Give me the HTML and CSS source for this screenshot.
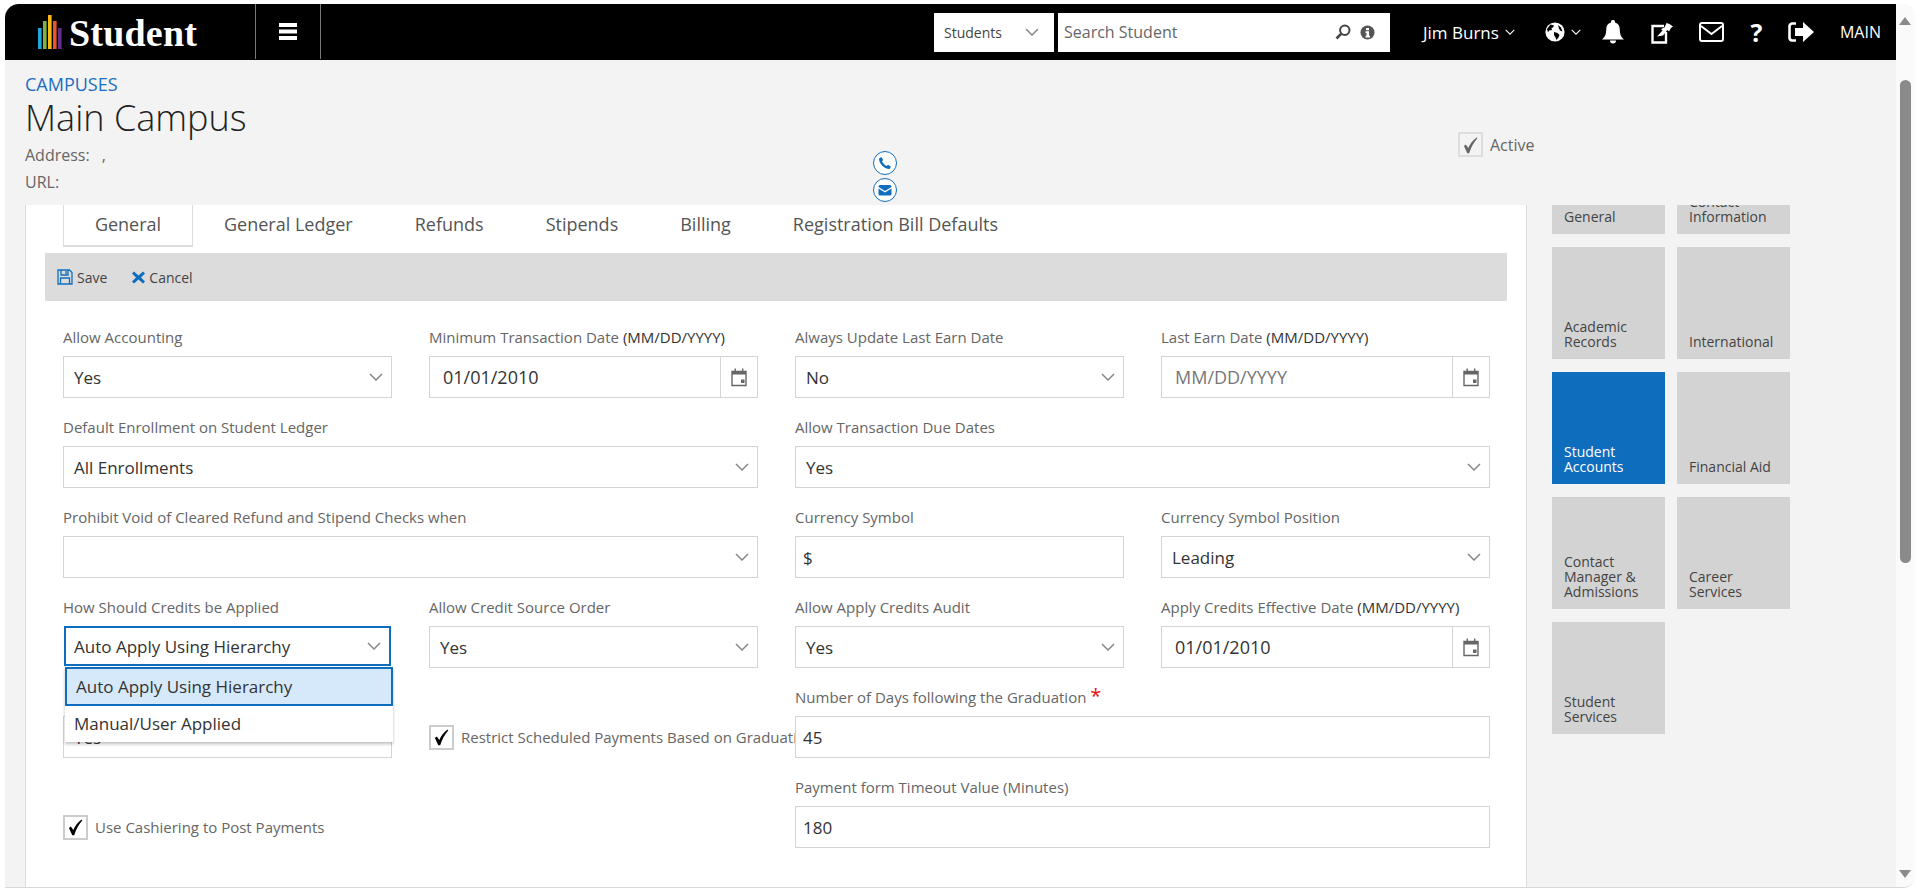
FILE: index.html
```html
<!DOCTYPE html>
<html lang="en">
<head>
    <meta charset="UTF-8">
    <title>Main Campus</title>
    <link rel="stylesheet" href="styles.css">
</head>
<body>
    <svg class="sprites" width="0" height="0">
        <symbol id="chevron" viewBox="0 0 14 8">
            <path d="M1 1l6 6 6-6" fill="none" stroke="currentColor" stroke-width="1.5"/>
        </symbol>
        <symbol id="calendar" viewBox="0 0 16 20">
            <path d="M1 4.5h14v14H1z" fill="none" stroke="#666" stroke-width="1.4"/>
            <path d="M1 4h14v3.500H1zM3.500 1.500h1.400v3H3.500zM11 1.500h1.400v3H11zM10 12.500h3.500v3.500H10z" fill="#666"/>
        </symbol>
        <symbol id="tick" viewBox="0 0 24 24">
            <path d="M4.500 13l2.200-1.600 2.800 4.100C11.500 11 14.500 6.500 19 3.500l.8.8C15.500 9.500 12.500 15 10.500 21.500H8.300z" fill="currentColor"/>
        </symbol>
    </svg>

    <div class="window">
        <div class="main">
            <!-- top bar -->
            <header class="topbar">
                <div class="logo">
                    <svg class="logo-bars" width="24" height="34" viewBox="0 0 24 34">
                        <rect x="0" y="13" width="3.600" height="21" fill="#1ea7dc"/>
                        <rect x="5" y="6" width="3.600" height="28" fill="#7cb342"/>
                        <rect x="10" y="0" width="3.600" height="34" fill="#fdb913"/>
                        <rect x="15" y="6" width="3.600" height="28" fill="#e8562a"/>
                        <rect x="20" y="13" width="3.600" height="21" fill="#5f2d8c"/>
                    </svg>
                    <span class="logo-text">Student</span>
                </div>
                <div class="menu-btn">
                    <svg width="18" height="17" viewBox="0 0 18 17"><path d="M0 0h18v4H0zM0 6.500h18v4H0zM0 13h18v4H0z" fill="#fff"/></svg>
                </div>
                <div class="search-type">
                    <span>Students</span>
                    <svg class="search-chevron" width="14" height="8"><use href="#chevron"/></svg>
                </div>
                <div class="search-box">
                    <span class="search-text">Search Student</span>
                    <svg width="16" height="16" viewBox="0 0 16 16"><circle cx="9.800" cy="6.200" r="4.700" fill="none" stroke="#444" stroke-width="2"/><path d="M6.300 9.700L1.500 14.500" stroke="#444" stroke-width="2.600"/></svg>
                    <svg class="info-icon" width="15" height="15" viewBox="0 0 15 15"><circle cx="7.500" cy="7.500" r="7" fill="#555"/><path d="M6 3h3v2.200H6zM5.500 6.300h3.500v4.500h1V12.500H5.500v-1.700h1V8h-1z" fill="#fff"/></svg>
                </div>
                <div class="user-menu">
                    <span>Jim Burns</span>
                    <svg width="10" height="6"><use href="#chevron"/></svg>
                </div>
                <div class="top-icons">
                    <span class="globe">
                        <svg width="20" height="20" viewBox="0 0 20 20"><circle cx="10" cy="10" r="9.600" fill="#fff"/><path d="M5.500 2.500L9 3.500 8 5.500 6.500 6l.5 2-3 .5-1 2L2 7zM9 10l3.500 1 2 2-1 2.500-2 2.500-1-2.500L9 13zM13 3l3 2.500 1.500 4-2.500-1-1-2z" fill="#000"/></svg>
                        <svg class="globe-chevron" width="10" height="6"><use href="#chevron"/></svg>
                    </span>
                    <svg class="bell" width="22" height="24" viewBox="0 0 22 24"><path d="M11 0a2 2 0 0 1 2 2.400c3.300.8 4.800 3.500 4.800 7 0 4.500 1 7.200 4.200 10H0c3.200-2.800 4.200-5.500 4.200-10 0-3.500 1.500-6.200 4.800-7A2 2 0 0 1 11 0zM8 20.500h6a3 3 0 0 1-6 0z" fill="#fff"/></svg>
                    <svg class="pin-note" width="23" height="23" viewBox="0 0 23 23"><path d="M13 5H1.500v16.500H15V11" fill="none" stroke="#fff" stroke-width="2.400"/><path d="M6 15.500l5.500-6-1.500-1.500 3.500-1.500 2-4.500 3 1L22 5.500l-2 1.500-2 3.500-1.500-1.500-4.500 5.500z" fill="#fff"/></svg>
                    <svg class="mail" width="25" height="20" viewBox="0 0 25 20"><rect x="1" y="1" width="23" height="18" rx="2" fill="none" stroke="#fff" stroke-width="2"/><path d="M2 4l10.500 8L23 4" fill="none" stroke="#fff" stroke-width="2"/></svg>
                    <span class="help">?</span>
                    <svg class="sign-out" width="26" height="20" viewBox="0 0 26 20"><path d="M8 1.500H4A3 3 0 0 0 1.500 4v12A3 3 0 0 0 4 18.500h4" fill="none" stroke="#fff" stroke-width="2.600"/><path d="M7 6h8V0l11 10-11 10v-6H7z" fill="#fff"/></svg>
                    <span class="main-link">MAIN</span>
                </div>
            </header>

            <!-- campus heading -->
            <div class="page-head">
                <div class="head-left">
                    <a class="crumb">CAMPUSES</a>
                    <h1 class="campus-name">Main Campus</h1>
                    <div class="head-line">Address: <span class="comma">,</span></div>
                    <div class="head-line">URL:</div>
                </div>
                <div class="head-icons">
                    <span class="round-icon">
                        <svg width="14" height="14" viewBox="0 0 14 14"><path d="M3.200 1L1 2.500C.8 7.500 6.500 13.200 11.500 13l1.500-2.200-3-2-1.500 1.200C7 9.200 4.800 7 4 5.500L5.200 4z" fill="#0f6dbd"/></svg>
                    </span>
                    <span class="round-icon">
                        <svg width="14" height="12" viewBox="0 0 14 12"><path d="M2 1h10a1.500 1.500 0 0 1 1.500 1.500v.5L7 7 .5 3v-.5A1.500 1.500 0 0 1 2 1zM.5 4.500L7 8.500l6.500-4V10A1.500 1.500 0 0 1 12 11.500H2A1.500 1.500 0 0 1 .5 10z" fill="#0f6dbd"/></svg>
                    </span>
                </div>
                <div class="head-active">
                    <span class="checkbox is-disabled"><svg width="22" height="22"><use href="#tick"/></svg></span>
                    <span>Active</span>
                </div>
            </div>

            <div class="content-row">
                <div class="panel">
                    <ul class="tabs">
                        <li class="tab is-active">General</li>
                        <li class="tab">General Ledger</li>
                        <li class="tab">Refunds</li>
                        <li class="tab">Stipends</li>
                        <li class="tab">Billing</li>
                        <li class="tab">Registration Bill Defaults</li>
                    </ul>

                    <div class="toolbar">
                        <span class="tool">
                            <svg width="16" height="16" viewBox="0 0 16 16"><path d="M1 1h11.500L15 3.500V15H1z" fill="none" stroke="#0f6dbd" stroke-width="1.300"/><path d="M4 1v5h7V1M9 2v3M3.500 15V9h9v6" fill="none" stroke="#0f6dbd" stroke-width="1.300"/></svg>
                            Save
                        </span>
                        <span class="tool tool-cancel">
                            <svg width="13" height="13" viewBox="0 0 13 13"><path d="M2 .5l4.500 4 4.500-4 2 2-4 4 4 4-2 2-4.500-4-4.500 4-2-2 4-4-4-4z" fill="#0f6dbd"/></svg>
                            Cancel
                        </span>
                    </div>

                    <div class="form-grid">
                        <div class="field">
                            <label>Allow Accounting</label>
                            <div class="select"><span>Yes</span><svg width="14" height="8"><use href="#chevron"/></svg></div>
                        </div>
                        <div class="field">
                            <label>Minimum Transaction Date <em>(MM/DD/YYYY)</em></label>
                            <div class="date"><span>01/01/2010</span><i><svg width="16" height="20"><use href="#calendar"/></svg></i></div>
                        </div>
                        <div class="field">
                            <label>Always Update Last Earn Date</label>
                            <div class="select"><span>No</span><svg width="14" height="8"><use href="#chevron"/></svg></div>
                        </div>
                        <div class="field">
                            <label>Last Earn Date <em>(MM/DD/YYYY)</em></label>
                            <div class="date"><span class="placeholder">MM/DD/YYYY</span><i><svg width="16" height="20"><use href="#calendar"/></svg></i></div>
                        </div>

                        <div class="field span-2">
                            <label>Default Enrollment on Student Ledger</label>
                            <div class="select"><span>All Enrollments</span><svg width="14" height="8"><use href="#chevron"/></svg></div>
                        </div>
                        <div class="field span-2">
                            <label>Allow Transaction Due Dates</label>
                            <div class="select"><span>Yes</span><svg width="14" height="8"><use href="#chevron"/></svg></div>
                        </div>

                        <div class="field span-2">
                            <label>Prohibit Void of Cleared Refund and Stipend Checks when</label>
                            <div class="select"><span></span><svg width="14" height="8"><use href="#chevron"/></svg></div>
                        </div>
                        <div class="field">
                            <label>Currency Symbol</label>
                            <div class="text-input">$</div>
                        </div>
                        <div class="field">
                            <label>Currency Symbol Position</label>
                            <div class="select"><span>Leading</span><svg width="14" height="8"><use href="#chevron"/></svg></div>
                        </div>

                        <div class="field">
                            <label>How Should Credits be Applied</label>
                            <div class="select-wrap">
                                <div class="select is-open"><span>Auto Apply Using Hierarchy</span><svg width="14" height="8"><use href="#chevron"/></svg></div>
                                <ul class="dropdown">
                                    <li class="option is-current">Auto Apply Using Hierarchy</li>
                                    <li class="option">Manual/User Applied</li>
                                </ul>
                            </div>
                        </div>
                        <div class="field">
                            <label>Allow Credit Source Order</label>
                            <div class="select"><span>Yes</span><svg width="14" height="8"><use href="#chevron"/></svg></div>
                        </div>
                        <div class="field">
                            <label>Allow Apply Credits Audit</label>
                            <div class="select"><span>Yes</span><svg width="14" height="8"><use href="#chevron"/></svg></div>
                        </div>
                        <div class="field">
                            <label>Apply Credits Effective Date <em>(MM/DD/YYYY)</em></label>
                            <div class="date"><span>01/01/2010</span><i><svg width="16" height="20"><use href="#calendar"/></svg></i></div>
                        </div>

                        <div class="field">
                            <label>&nbsp;</label>
                            <div class="select"><span>Yes</span><svg width="14" height="8"><use href="#chevron"/></svg></div>
                        </div>
                        <div class="field check-field clipped">
                            <span class="checkbox"><svg width="22" height="22"><use href="#tick"/></svg></span>
                            <span class="check-label">Restrict Scheduled Payments Based on Graduation</span>
                        </div>
                        <div class="field span-2">
                            <label>Number of Days following the Graduation <b class="req">*</b></label>
                            <div class="text-input">45</div>
                        </div>

                        <div class="field check-field span-2">
                            <span class="checkbox"><svg width="22" height="22"><use href="#tick"/></svg></span>
                            <span class="check-label">Use Cashiering to Post Payments</span>
                        </div>
                        <div class="field span-2">
                            <label>Payment form Timeout Value (Minutes)</label>
                            <div class="text-input">180</div>
                        </div>
                    </div>
                </div>

                <nav class="tiles">
                    <a class="tile">General</a>
                    <a class="tile">Contact Information</a>
                    <a class="tile">Academic Records</a>
                    <a class="tile">International</a>
                    <a class="tile is-active">Student Accounts</a>
                    <a class="tile">Financial Aid</a>
                    <a class="tile">Contact Manager &amp; Admissions</a>
                    <a class="tile">Career Services</a>
                    <a class="tile">Student Services</a>
                </nav>
            </div>
        </div>

        <div class="scrollbar">
            <span class="arrow-up"></span>
            <div class="thumb"></div>
            <span class="arrow-down"></span>
        </div>
    </div>
</body>
</html>
```

FILE: styles.css
```css
* {
    margin: 0;
    padding: 0;
    box-sizing: border-box;
}

html, body {
    height: 100%;
    overflow: hidden;
    background: #fff;
}

body {
    font-family: "Open Sans", "Liberation Sans", sans-serif;
    color: #444;
    padding: 4px 5px 3px 5px;
}

ul {
    list-style: none;
}

.sprites {
    position: absolute;
}

.window {
    display: flex;
    height: 100%;
    overflow: hidden;
    border-radius: 14px 10px 12px 0;
    border-bottom: 1px solid #d8d8d8;
}

.main {
    flex: 1;
    min-width: 0;
    display: flex;
    flex-direction: column;
    background: #f3f3f3;
}

/* top bar */
.topbar {
    flex: none;
    display: flex;
    align-items: center;
    height: 56px;
    background: #000;
    color: #fff;
}

.logo {
    display: flex;
    align-items: flex-start;
    width: 250px;
    height: 56px;
    padding: 11px 0 0 33px;
}

.logo-text {
    margin-left: 7px;
    font-family: "Liberation Serif", serif;
    font-size: 38px;
    font-weight: 700;
    line-height: 36px;
    letter-spacing: .2px;
}

.menu-btn {
    display: flex;
    align-items: center;
    justify-content: center;
    width: 66px;
    height: 55px;
    margin-top: -1px;
    border-left: 1px solid #777;
    border-right: 1px solid #777;
    padding-bottom: 1px;
}

.search-type {
    display: flex;
    align-items: center;
    width: 120px;
    height: 39px;
    margin-left: 613px;
    padding-left: 10px;
    background: #fff;
    color: #444;
    font-size: 14px;
}

.search-chevron {
    margin-left: 23px;
    color: #888;
}

.search-box {
    display: flex;
    align-items: center;
    width: 332px;
    height: 39px;
    margin-left: 4px;
    padding: 0 15px 0 6px;
    background: #fff;
}

.search-text {
    flex: 1;
    font-size: 16px;
    color: #666;
}

.info-icon {
    margin-left: 9px;
}

.user-menu {
    display: flex;
    align-items: center;
    margin-left: 33px;
    font-size: 17px;
    color: #fff;
}

.user-menu svg {
    margin-left: 6px;
}

.top-icons {
    display: flex;
    align-items: center;
    margin-left: 30px;
}

.globe {
    display: flex;
    align-items: center;
    margin-right: 21px;
}

.globe-chevron {
    margin-left: 6px;
}

.pin-note {
    margin-left: 27px;
}

.mail {
    margin-left: 25px;
}

.help {
    width: 15px;
    margin-left: 25px;
    font-size: 25px;
    font-weight: 700;
    line-height: 1;
    text-align: center;
}

.sign-out {
    margin-left: 24px;
}

.main-link {
    margin-left: 26px;
    font-size: 16px;
}

/* campus heading */
.page-head {
    flex: none;
    display: flex;
    height: 145px;
    padding-left: 20px;
}

.head-left {
    width: 848px;
    padding-top: 12px;
}

.crumb {
    display: block;
    color: #1b6ec2;
    font-size: 18px;
    line-height: 24px;
}

.campus-name {
    font-size: 36px;
    font-weight: 300;
    line-height: 44px;
    color: #222;
}

.head-line {
    margin-top: 3px;
    font-size: 16px;
    line-height: 24px;
    color: #666;
}

.comma {
    margin-left: 8px;
}

.head-icons {
    display: flex;
    flex-direction: column;
    gap: 3px;
    padding-top: 91px;
}

.round-icon {
    display: flex;
    align-items: center;
    justify-content: center;
    width: 24px;
    height: 24px;
    border: 1px solid #0f6dbd;
    border-radius: 50%;
    background: #fff;
}

.head-active {
    display: flex;
    align-items: center;
    gap: 7px;
    height: 25px;
    margin: 72px 0 0 561px;
    font-size: 16px;
    color: #666;
}

/* checkboxes */
.checkbox {
    flex: none;
    display: flex;
    align-items: center;
    justify-content: center;
    width: 25px;
    height: 25px;
    border: 2px solid #ccc;
    background: #fff;
    color: #000;
}

.checkbox.is-disabled {
    border-color: #ddd;
    background: #f3f3f3;
    color: #666;
}

.content-row {
    flex: 1;
    min-height: 0;
    display: flex;
    overflow: hidden;
}

/* main panel */
.panel {
    width: 1502px;
    margin-left: 20px;
    padding: 0 19px;
    background: #fff;
    border-left: 1px solid #ddd;
    border-right: 1px solid #ddd;
}

.tabs {
    display: flex;
    height: 42px;
    margin: 0 0 6px 18px;
}

.tab {
    padding: 0 31px;
    font-size: 18px;
    line-height: 38px;
    color: #555;
}

.tab.is-active {
    width: 130px;
    padding: 0;
    text-align: center;
    border: 1px solid #ddd;
    border-top: 0;
    border-bottom-width: 2px;
}

.toolbar {
    display: flex;
    align-items: center;
    height: 48px;
    padding-left: 12px;
    background: #dcdcdc;
    font-size: 14px;
    color: #444;
}

.tool {
    display: flex;
    align-items: center;
    gap: 4px;
}

.tool-cancel {
    margin-left: 25px;
}

.form-grid {
    display: grid;
    grid-template-columns: repeat(4, 329px);
    column-gap: 37px;
    row-gap: 17px;
    padding: 24px 18px 0;
}

.span-2 {
    grid-column: span 2;
}

.field label {
    display: block;
    margin-bottom: 7px;
    font-size: 15px;
    line-height: 24px;
    color: #666;
    white-space: nowrap;
}

.field em {
    font-style: normal;
    color: #333;
}

.req {
    color: #e11;
    font-size: 20px;
    line-height: 10px;
    font-weight: 400;
}

.select, .date, .text-input {
    display: flex;
    align-items: center;
    height: 42px;
    background: #fff;
    border: 1px solid #d4d4d4;
    font-size: 17px;
    color: #333;
}

.select {
    justify-content: space-between;
    padding: 0 8px 0 10px;
}

.select svg {
    flex: none;
    color: #888;
}

.text-input {
    padding-left: 7px;
}

.date span {
    flex: 1;
    padding-left: 13px;
    font-size: 18px;
}

.date .placeholder {
    color: #777;
}

.date i {
    display: flex;
    align-items: center;
    justify-content: center;
    width: 37px;
    height: 100%;
    border-left: 1px solid #d4d4d4;
}

/* the opened dropdown lies over the row below */
.select-wrap {
    position: relative;
    z-index: 2;
}

.select.is-open {
    margin: 1px;
    height: 40px;
    border: 2px solid #0f6dbd;
    padding-left: 8px;
}

.dropdown {
    position: absolute;
    top: 41px;
    left: 2px;
    width: 328px;
    background: #fff;
    box-shadow: 0 2px 3px rgba(0, 0, 0, .25);
    font-size: 17px;
    color: #333;
}

.option {
    height: 36px;
    padding-left: 9px;
    line-height: 36px;
}

.option.is-current {
    height: 39px;
    padding-left: 9px;
    line-height: 35px;
    border: 2px solid #0f6dbd;
    background: #d6e9fb;
}

.check-field {
    display: flex;
    align-items: center;
    gap: 7px;
    height: 42px;
    margin-top: 31px;
    font-size: 15px;
    color: #666;
    white-space: nowrap;
}

.clipped {
    margin-right: -37px;
    overflow: hidden;
}

/* tile menu */
.tiles {
    flex: none;
    display: grid;
    grid-template-columns: repeat(2, 113px);
    grid-auto-rows: 112px;
    gap: 13px 12px;
    margin: -83px 0 0 25px;
    align-content: start;
}

.tile {
    display: flex;
    align-items: flex-end;
    padding: 0 10px 10px 12px;
    background: #d3d3d3;
    font-size: 14px;
    line-height: 15px;
    color: #444;
}

.tile.is-active {
    background: #0f6dbd;
    color: #fff;
}

/* scrollbar */
.scrollbar {
    flex: none;
    position: relative;
    width: 19px;
    background: #fafafa;
}

.thumb {
    position: absolute;
    top: 76px;
    left: 4px;
    width: 11px;
    height: 483px;
    border-radius: 6px;
    background: #8a8a8a;
}

.arrow-up, .arrow-down {
    position: absolute;
    left: 3px;
    border-left: 6px solid transparent;
    border-right: 6px solid transparent;
}

.arrow-up {
    top: 13px;
    border-bottom: 8px solid #8a8a8a;
}

.arrow-down {
    bottom: 9px;
    border-top: 8px solid #8a8a8a;
}
```
